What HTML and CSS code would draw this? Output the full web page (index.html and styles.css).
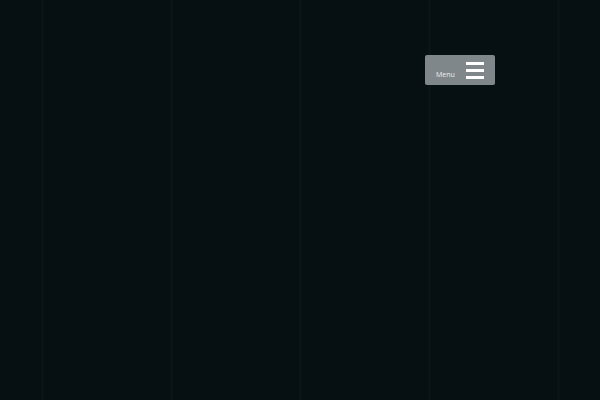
FILE: index.html
```html
<!DOCTYPE html>
<html>
<head>
<meta charset="utf-8">
<link rel="stylesheet" href="styles.css">
</head>
<body>
<div class="page">
  <div class="grid">
    <div class="col"></div>
    <div class="col"></div>
    <div class="col"></div>
    <div class="col"></div>
  </div>
  <button class="menu-btn">
    <span class="menu-label">Menu</span>
    <span class="burger"><i></i><i></i><i></i></span>
  </button>
</div>
</body>
</html>
```
FILE: styles.css
```css
html, body {
  margin: 0;
  padding: 0;
  background: #061012;
  width: 600px;
  height: 400px;
  overflow: hidden;
}
.page {
  position: relative;
  width: 600px;
  height: 400px;
}
.grid {
  display: flex;
  margin-left: 41px;
  width: 519px;
  height: 400px;
}
.col {
  flex: 1;
  border-left: 3px solid #091416;
}
.col:last-child {
  border-right: 3px solid #091416;
}
.menu-btn {
  position: absolute;
  left: 425px;
  top: 55px;
  width: 70px;
  height: 30px;
  background: #80878a;
  border: none;
  border-radius: 2px;
  padding: 0 11px 0 11px;
  display: flex;
  align-items: center;
  justify-content: space-between;
  font-family: "Open Sans", sans-serif;
  font-size: 7px;
  color: #eeeeee;
  cursor: pointer;
}
.menu-label {
  margin-top: 9px;
}
.burger {
  display: flex;
  flex-direction: column;
  gap: 4px;
  width: 18px;
}
.burger i {
  display: block;
  height: 3px;
  background: #ffffff;
}
```
